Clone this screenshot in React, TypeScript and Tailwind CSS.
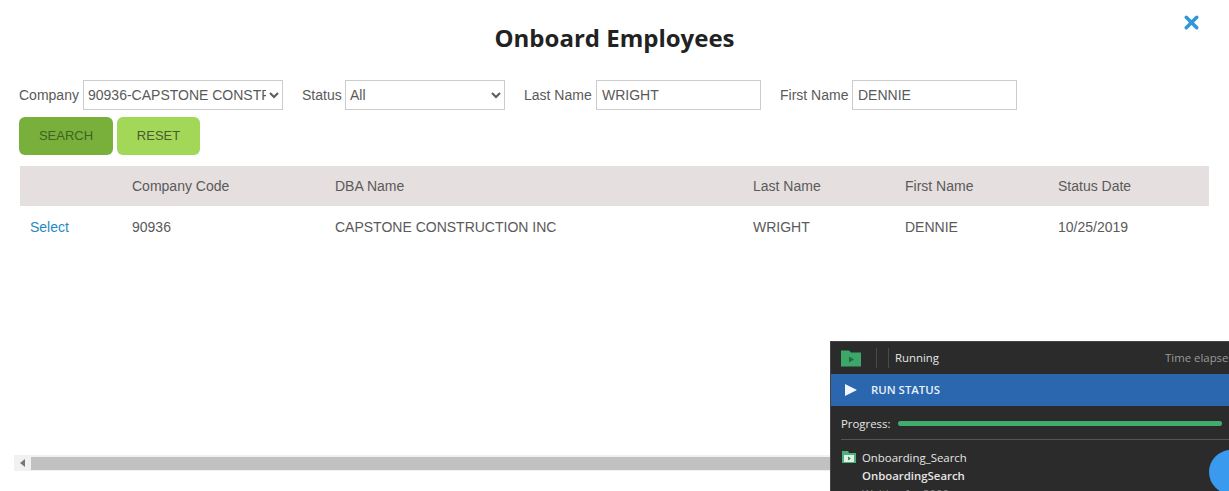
import { X } from 'lucide-react';

const columns = [
  { label: '', value: 'Select', width: 'w-[102px]' },
  { label: 'Company Code', value: '90936', width: 'w-[203px]' },
  { label: 'DBA Name', value: 'CAPSTONE CONSTRUCTION INC', width: 'w-[418px]' },
  { label: 'Last Name', value: 'WRIGHT', width: 'w-[152px]' },
  { label: 'First Name', value: 'DENNIE', width: 'w-[153px]' },
  { label: 'Status Date', value: '10/25/2019', width: 'flex-1' },
];

function FolderIcon({ className }: { className: string }) {
  return (
    <svg viewBox="0 0 20 16" className={className}>
      <path d="M0 0h8l2 2h10v14H0z" fill="#3da76a" />
      <path d="M8 6l5 3-5 3z" fill="#1f6b42" />
    </svg>
  );
}

function RunPanel() {
  return (
    <div className="absolute left-[830px] top-[341px] w-[420px] h-[150px] overflow-hidden bg-[#2b2b2b] border-t border-l border-[#444] font-['Open_Sans',sans-serif] text-[11.4px]">
      <div className="flex items-center h-[32px] pl-[10px]">
        <FolderIcon className="w-[20px] h-[17px] shrink-0" />
        <div className="w-px h-[20px] shrink-0 bg-[#4a4a4a] ml-[15px]" />
        <div className="w-px h-[20px] shrink-0 bg-[#4a4a4a] ml-[11px]" />
        <span className="ml-[6px] w-[270px] shrink-0 text-[#e6e6e6]">Running</span>
        <span className="whitespace-nowrap text-[#9a9a9a]">Time elapsed</span>
      </div>
      <div className="flex items-center h-[32px] bg-[#2a67ae] pl-[14px]">
        <svg viewBox="0 0 12 12" className="w-[12px] h-[12px] shrink-0">
          <path d="M0 0l12 6-12 6z" fill="#f2f6fb" />
        </svg>
        <span className="ml-[14px] font-semibold text-[#e8f0f8]">RUN STATUS</span>
      </div>
      <div className="flex items-center h-[34px] mx-[10px] pt-[2px] border-b border-[#555]">
        <span className="w-[57px] shrink-0 text-[#e6e6e6]">Progress:</span>
        <div className="w-[324px] h-[5px] shrink-0 rounded-sm bg-[#3fae6c]" />
      </div>
      <div className="relative flex pl-[11px] pt-[9px]">
        <svg viewBox="0 0 14 12" className="w-[14px] h-[12px] mt-[2px] shrink-0">
          <path d="M0 0h6l1 2h7v10H0z" fill="#4cb27a" />
          <path d="M2 4h10v7H2z" fill="#dff1e6" />
          <path d="M6 5.5l3 2-3 2z" fill="#2f8a58" />
        </svg>
        <div className="ml-[6px] leading-[18px] text-[#e6e6e6]">
          <div>Onboarding_Search</div>
          <div className="font-semibold">OnboardingSearch</div>
          <div className="text-[#8a8a8a]">Waiting for 3000</div>
        </div>
        <div className="absolute left-[378px] top-[10px] w-[44px] h-[44px] rounded-full bg-[#3a9bee]" />
      </div>
    </div>
  );
}

export default function App() {
  return (
    <div className="relative h-[491px] w-[1229px] overflow-hidden bg-white font-['Liberation_Sans',Arial,sans-serif] text-[14px] text-[#5a5a5a]">
      <X className="absolute left-[1181px] top-[12px] w-[21px] h-[21px] text-[#2f97dc]" strokeWidth={4} />

      <h1 className="pt-[21px] h-[80px] text-center font-['Open_Sans',sans-serif] text-[24px] leading-[33px] font-bold text-[#222]">
        Onboard Employees
      </h1>

      <div className="flex items-center h-[30px] pl-[19px]">
        <label className="w-[64px] shrink-0">Company</label>
        <select className="w-[200px] h-[30px] bg-white border border-[#ccc] text-[14px] text-[#5a5a5a]">
          <option>90936-CAPSTONE CONSTRUCTION INC</option>
        </select>
        <label className="ml-[19px] w-[43px] shrink-0">Status</label>
        <select className="w-[160px] h-[30px] bg-white border border-[#ccc] text-[14px] text-[#5a5a5a]">
          <option>All</option>
        </select>
        <label className="ml-[19px] w-[72px] shrink-0">Last Name</label>
        <input
          readOnly
          value="WRIGHT"
          className="w-[165px] h-[30px] px-[5px] border border-[#ccc] text-[14px] text-[#5a5a5a]"
        />
        <label className="ml-[19px] w-[72px] shrink-0">First Name</label>
        <input
          readOnly
          value="DENNIE"
          className="w-[165px] h-[30px] px-[5px] border border-[#ccc] text-[14px] text-[#5a5a5a]"
        />
      </div>

      <div className="flex gap-[4px] pl-[19px] mt-[7px] text-[13px]">
        <button className="w-[94px] h-[38px] pb-[1px] rounded-[6px] bg-[#78b03b] text-[#3f6322]">SEARCH</button>
        <button className="w-[83px] h-[38px] pb-[1px] rounded-[6px] bg-[#a2d758] text-[#4a5a33]">RESET</button>
      </div>

      <div className="ml-[20px] mt-[11px] w-[1189px]">
        <div className="flex items-center h-[40px] bg-[#e6dfdf]">
          {columns.map((c) => (
            <div key={c.value} className={`${c.width} pl-[10px]`}>
              {c.label}
            </div>
          ))}
        </div>
        <div className="flex items-center h-[42px]">
          {columns.map((c, i) => (
            <div key={c.value} className={`${c.width} pl-[10px] ${i === 0 ? 'text-[#1f8ac0]' : ''}`}>
              {c.value}
            </div>
          ))}
        </div>
      </div>

      <div className="flex items-center ml-[14px] mt-[207px] h-[16px] w-[1215px] bg-[#f1f1f1]">
        <div className="flex justify-center w-[17px]">
          <div className="border-y-[4px] border-r-[5px] border-y-transparent border-r-[#777]" />
        </div>
        <div className="flex-1 h-[13px] bg-[#c1c1c1]" />
      </div>

      <RunPanel />
    </div>
  );
}
